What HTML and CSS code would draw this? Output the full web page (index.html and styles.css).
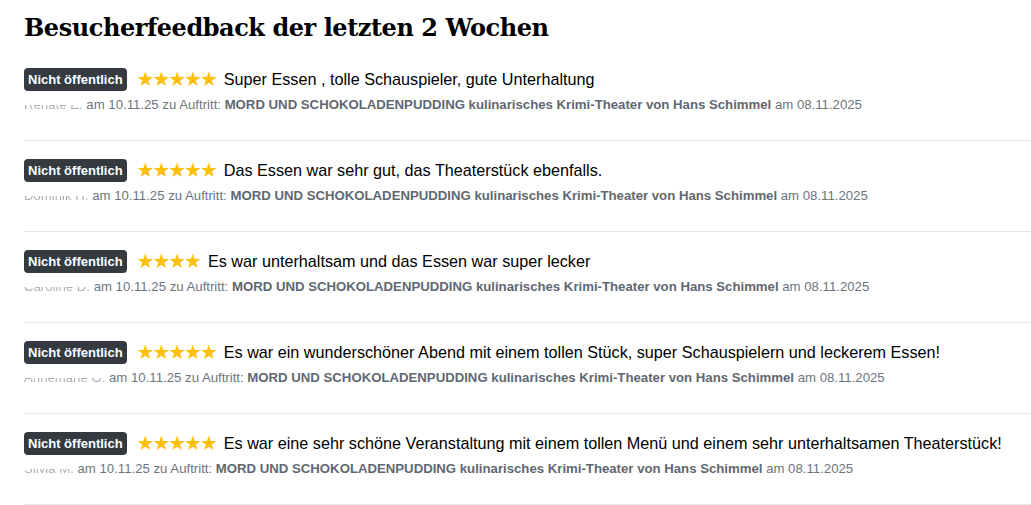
FILE: index.html
```html
<html lang="de">
<head>
    <title>Besucherfeedback</title>
    <meta http-equiv="Content-Type" content="text/html; charset=utf-8">
    <link rel="stylesheet" href="styles.css">
</head>
<body>
    <h2 class="title">Besucherfeedback der letzten 2 Wochen</h2>
    <div class="feedbackList">
        <div class="feedback">
            <div class="headLine">
                <span class="badge">Nicht öffentlich</span>
                <span class="stars">★★★★★</span>
                <span class="comment">Super Essen , tolle Schauspieler, gute Unterhaltung</span>
            </div>
            <div class="meta"><span class="name">Renate E.</span> am 10.11.25 zu Auftritt: <b>MORD UND SCHOKOLADENPUDDING kulinarisches Krimi-Theater von Hans Schimmel</b> am 08.11.2025</div>
        </div>
        <div class="feedback">
            <div class="headLine">
                <span class="badge">Nicht öffentlich</span>
                <span class="stars">★★★★★</span>
                <span class="comment">Das Essen war sehr gut, das Theaterstück ebenfalls.</span>
            </div>
            <div class="meta"><span class="name">Dominik H.</span> am 10.11.25 zu Auftritt: <b>MORD UND SCHOKOLADENPUDDING kulinarisches Krimi-Theater von Hans Schimmel</b> am 08.11.2025</div>
        </div>
        <div class="feedback">
            <div class="headLine">
                <span class="badge">Nicht öffentlich</span>
                <span class="stars">★★★★</span>
                <span class="comment">Es war unterhaltsam und das Essen war super lecker</span>
            </div>
            <div class="meta"><span class="name">Caroline D.</span> am 10.11.25 zu Auftritt: <b>MORD UND SCHOKOLADENPUDDING kulinarisches Krimi-Theater von Hans Schimmel</b> am 08.11.2025</div>
        </div>
        <div class="feedback">
            <div class="headLine">
                <span class="badge">Nicht öffentlich</span>
                <span class="stars">★★★★★</span>
                <span class="comment">Es war ein wunderschöner Abend mit einem tollen Stück, super Schauspielern und leckerem Essen!</span>
            </div>
            <div class="meta"><span class="name">Annemarie O.</span> am 10.11.25 zu Auftritt: <b>MORD UND SCHOKOLADENPUDDING kulinarisches Krimi-Theater von Hans Schimmel</b> am 08.11.2025</div>
        </div>
        <div class="feedback">
            <div class="headLine">
                <span class="badge">Nicht öffentlich</span>
                <span class="stars">★★★★★</span>
                <span class="comment">Es war eine sehr schöne Veranstaltung mit einem tollen Menü und einem sehr unterhaltsamen Theaterstück!</span>
            </div>
            <div class="meta"><span class="name">Silvia M. </span> am 10.11.25 zu Auftritt: <b>MORD UND SCHOKOLADENPUDDING kulinarisches Krimi-Theater von Hans Schimmel</b> am 08.11.2025</div>
        </div>
    </div>
</body>
</html>
```

FILE: styles.css
```css
body{
    margin: 0;
    padding: 0 0 0 24px;
    background-color: white;
    font-family: "Liberation Sans", Arial, sans-serif;
    color: #000;
    overflow: hidden;
}
.title{
    font-family: "DejaVu Serif", serif;
    font-weight: bold;
    font-size: 24px;
    letter-spacing: -0.45px;
    margin: 12px 0 23px 0;
    line-height: 32px;
}
.feedback{
    padding: 17px 0 25px 0;
    border-bottom: 1px solid #e8e9eb;
}
.feedback:first-child{
    padding-top: 0;
}
.headLine{
    display: flex;
    align-items: center;
    height: 24px;
}
.badge{
    background-color: #343a40;
    color: white;
    font-size: 13px;
    font-weight: bold;
    border-radius: 4px;
    padding: 0 4px;
    height: 23px;
    line-height: 23px;
}
.stars{
    color: #ffc107;
    font-family: "DejaVu Sans", sans-serif;
    font-size: 20px;
    letter-spacing: -2.1px;
    margin-left: 10px;
    margin-right: 8px;
}
.comment{
    font-size: 16.2px;
}
.meta{
    margin-top: 4px;
    font-size: 13.2px;
    line-height: 20px;
    color: #6c757d;
    white-space: nowrap;
}
.meta b{
    color: #5f6872;
}
.name{
    color: transparent;
    background: linear-gradient(to bottom, transparent 55%, #a9aeb4 55%);
    -webkit-background-clip: text;
    background-clip: text;
}
```
